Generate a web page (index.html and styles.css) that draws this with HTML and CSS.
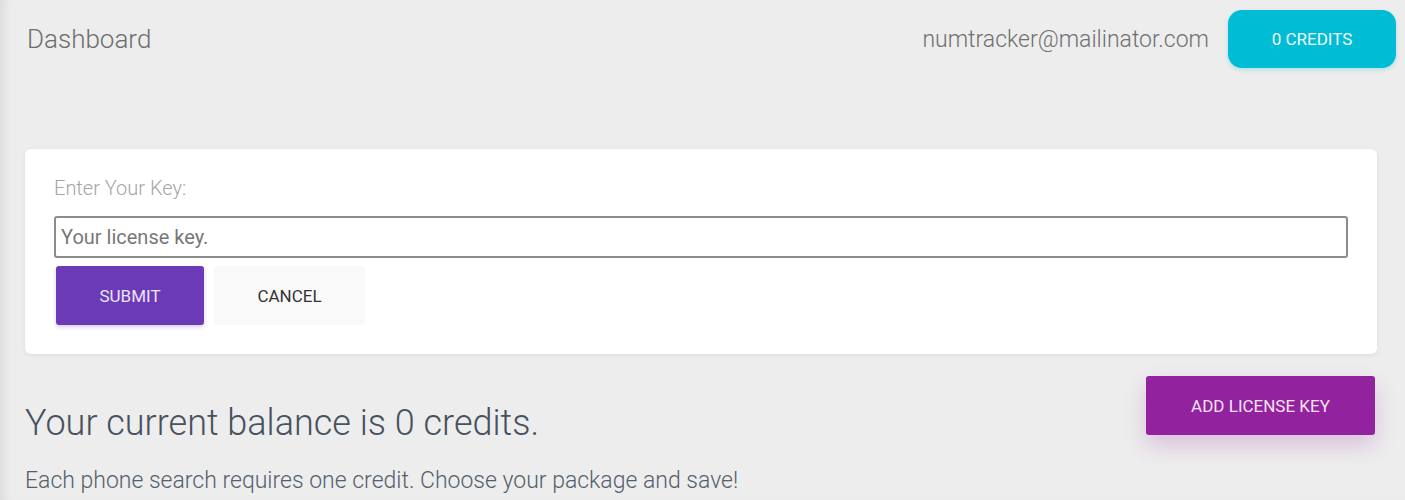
FILE: index.html
```html
<!DOCTYPE html>
<html>
<head>
<meta charset="utf-8">
<title>Dashboard</title>
<link rel="stylesheet" href="styles.css">
</head>
<body>
<div class="page">
  <header class="topbar">
    <div class="title">Dashboard</div>
    <div class="account">
      <span class="email">numtracker@mailinator.com</span>
      <button class="btn btn-credits">0 CREDITS</button>
    </div>
  </header>

  <section class="card">
    <label class="key-label" for="key">Enter Your Key:</label>
    <input class="key-input" id="key" type="text" placeholder="Your license key.">
    <div class="actions">
      <button class="btn btn-submit">SUBMIT</button>
      <button class="btn btn-cancel">CANCEL</button>
    </div>
  </section>

  <section class="balance-row">
    <div class="balance-text">
      <h2 class="balance">Your current balance is 0 credits.</h2>
      <p class="hint">Each phone search requires one credit. Choose your package and save!</p>
    </div>
    <button class="btn btn-add">ADD LICENSE KEY</button>
  </section>
</div>
</body>
</html>
```

FILE: styles.css
```css
html, body {
  margin: 0;
  padding: 0;
}
body {
  background: #ededed;
  font-family: Roboto, "Liberation Sans", Arial, sans-serif;
  min-height: 100vh;
  box-shadow: inset 10px 0 10px -6px rgba(0, 0, 0, 0.08);
  overflow: hidden;
}
.page {
  padding: 10px 9px 0 25px;
}
.topbar {
  display: flex;
  align-items: center;
  justify-content: space-between;
  height: 58px;
}
.title {
  font-size: 26px;
  font-weight: 300;
  color: #6e6e6e;
  padding-left: 2px;
}
.account {
  display: flex;
  align-items: center;
  gap: 19px;
}
.email {
  font-size: 23px;
  font-weight: 300;
  color: #707070;
}
.btn {
  font-family: Roboto, "Liberation Sans", Arial, sans-serif;
  font-size: 17px;
  border: none;
  cursor: pointer;
  padding: 0;
}
.btn-credits {
  width: 168px;
  height: 58px;
  border-radius: 14px;
  background: #00bcd4;
  color: #f2fbfd;
  box-shadow: 0 2px 4px rgba(0, 188, 212, 0.25);
}
.card {
  margin: 81px 19px 0 0;
  background: #fff;
  border-radius: 6px;
  box-shadow: 0 1px 4px rgba(0, 0, 0, 0.08);
  padding: 28px 29px 29px 29px;
  display: flex;
  flex-direction: column;
}
.key-label {
  font-size: 20px;
  font-weight: 300;
  color: #a5a5a5;
  line-height: 22px;
}
.key-input {
  margin-top: 17px;
  height: 42px;
  box-sizing: border-box;
  border: 2px solid #8c8c8c;
  border-radius: 3px;
  padding: 0 5px;
  font-family: Roboto, "Liberation Sans", Arial, sans-serif;
  font-size: 20px;
  color: #333;
  outline: none;
}
.key-input::placeholder {
  color: #777;
}
.actions {
  display: flex;
  gap: 10px;
  margin-top: 8px;
  padding-left: 2px;
}
.btn-submit {
  width: 148px;
  height: 59px;
  border-radius: 3px;
  background: #6b3bb7;
  color: #ece4f7;
  box-shadow: 0 2px 4px rgba(107, 59, 183, 0.25);
}
.btn-cancel {
  width: 151px;
  height: 59px;
  border-radius: 4px;
  background: #f9f9f9;
  color: #333;
}
.balance-row {
  display: flex;
  justify-content: space-between;
  align-items: flex-start;
  margin-top: 22px;
  padding-right: 21px;
}
.balance {
  margin: 26px 0 0 0;
  font-size: 36px;
  font-weight: 300;
  line-height: 42px;
  color: #48525e;
}
.hint {
  margin: 23px 0 0 0;
  font-size: 23px;
  font-weight: 300;
  line-height: 27px;
  color: #56606b;
}
.btn-add {
  width: 229px;
  height: 59px;
  border-radius: 3px;
  background: #93229f;
  color: #f3e4f5;
  box-shadow: 0 10px 22px rgba(147, 34, 159, 0.22);
}
```
